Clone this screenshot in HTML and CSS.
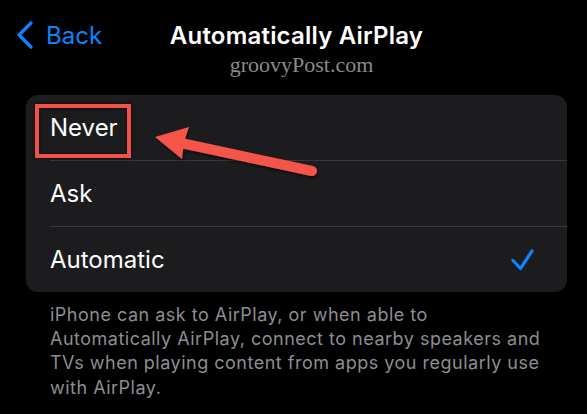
FILE: index.html
```html
<!DOCTYPE html>
<html lang="en">
<head>
    <meta charset="UTF-8">
    <meta name="viewport" content="width=device-width, initial-scale=1.0">
    <title>Automatically AirPlay</title>
    <link rel="stylesheet" href="styles.css">
</head>
<body>
    <div class="nav-bar">
        <a class="back-link" href="#">
            <svg class="chevron" width="18" height="28" viewBox="0 0 18 28">
                <path d="M15 2 L3 14 L15 26" fill="none" stroke="#0a84ff" stroke-width="3.2" stroke-linecap="round" stroke-linejoin="round"/>
            </svg>
            <span>Back</span>
        </a>
        <h1 class="nav-title">Automatically AirPlay</h1>
        <div></div>
    </div>
    <div class="watermark">groovyPost.com</div>

    <div class="settings-group">
        <div class="option-row">
            <span class="option-label">Never</span>
        </div>
        <div class="option-row">
            <span class="option-label">Ask</span>
        </div>
        <div class="option-row">
            <span class="option-label">Automatic</span>
            <svg class="checkmark" width="26" height="24" viewBox="0 0 26 24">
                <path d="M3 12.5 L10.5 20.5 L22 3" fill="none" stroke="#0a84ff" stroke-width="3.2" stroke-linecap="round" stroke-linejoin="round"/>
            </svg>
        </div>

        <div class="highlight-box"></div>
        <svg class="pointer-arrow" width="200" height="60" viewBox="0 0 200 60">
            <defs>
                <filter id="arrowShadow" x="-10%" y="-30%" width="120%" height="160%">
                    <feDropShadow dx="1" dy="2" stdDeviation="1.5" flood-color="#000" flood-opacity="0.6"/>
                </filter>
            </defs>
            <g filter="url(#arrowShadow)" fill="#f5544a">
                <path d="M183 46 L52 18" stroke="#f5544a" stroke-width="10" stroke-linecap="round"/>
                <path d="M26 12 L60 2 L55 17 L53 34 Z"/>
            </g>
        </svg>
    </div>

    <p class="group-footer">iPhone can ask to AirPlay, or when able to Automatically AirPlay, connect to nearby speakers and TVs when playing content from apps you regularly use with AirPlay.</p>
</body>
</html>
```

FILE: styles.css
```css
body {
    margin: 0;
    background-color: #000;
    font-family: Inter, "Open Sans", sans-serif;
    color: #fff;
    width: 587px;
    height: 414px;
    overflow: hidden;
}

.nav-bar {
    display: grid;
    grid-template-columns: 1fr auto 1fr;
    align-items: center;
    padding: 20px 16px 0 16px;
    height: 30px;
}

.back-link {
    display: flex;
    align-items: center;
    gap: 12px;
    color: #0a84ff;
    text-decoration: none;
    font-size: 24px;
}

.chevron {
    display: block;
}

.nav-title {
    margin: 0;
    padding-left: 6px;
    font-size: 24px;
    font-weight: 600;
    letter-spacing: 0.2px;
}

.watermark {
    font-family: "Liberation Serif", "DejaVu Serif", serif;
    font-size: 22px;
    color: #8a8a8a;
    text-align: center;
    padding-left: 16px;
    margin-top: 2px;
    line-height: 26px;
}

.settings-group {
    position: relative;
    margin: 17px 20px 0 26px;
    background-color: #1c1c1e;
    border-radius: 12px;
}

.option-row {
    box-sizing: border-box;
    display: flex;
    align-items: center;
    justify-content: space-between;
    height: 66px;
    margin-left: 24px;
    padding-right: 31px;
    border-top: 1px solid #38383a;
    font-size: 24px;
}

.option-row:first-child {
    border-top: none;
    height: 65px;
}

.checkmark {
    display: block;
}

.highlight-box {
    position: absolute;
    left: 9px;
    top: 9px;
    width: 88px;
    height: 46px;
    border: 4px solid #f0524a;
    box-shadow: 0 0 3px rgba(0, 0, 0, 0.8), inset 0 0 3px rgba(0, 0, 0, 0.8);
}

.pointer-arrow {
    position: absolute;
    left: 103px;
    top: 30px;
}

.group-footer {
    margin: 11px 40px 0 50px;
    font-size: 18px;
    letter-spacing: 0.5px;
    line-height: 24.2px;
    color: #8d8d93;
}
```
